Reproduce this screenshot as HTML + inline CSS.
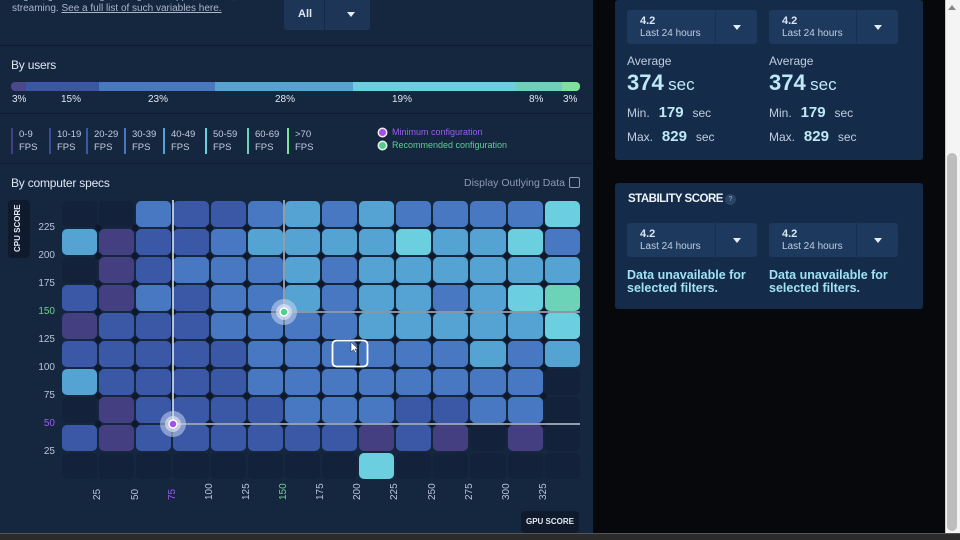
<!DOCTYPE html>
<html><head><meta charset="utf-8"><style>
*{margin:0;padding:0;box-sizing:border-box}
body{width:960px;height:540px;overflow:hidden;background:#07080b;font-family:"Liberation Sans",sans-serif;position:relative;color:#c9d3e3}
.a{position:absolute}
#left{left:0;top:0;width:593px;height:533px;background:#15263f}
.sep{position:absolute;left:0;width:593px;height:1px;background:#0f1c2f}
.h{font-size:12px;color:#dfe7f3;letter-spacing:-.2px}
.pct{font-size:10px;color:#dfe7f3;top:94px}
.lg{top:128px;font-size:9.5px;line-height:13px;color:#c3cde0;padding-left:6px;border-left:2px solid}
#grid{left:61px;top:200px;display:grid;grid-template-columns:repeat(14,37.14px);grid-template-rows:repeat(10,28px)}
#grid i{display:block;margin:1px;border-radius:5px}
.e{background:#14213a}.p{background:#443f80}.b{background:#3a58a6}.m{background:#4878c2}.l{background:#55a3d2}.c{background:#6bcfe0}.g{background:#6dd3b8}
.yl{font-size:10px;color:#b8c4d8;width:30px;text-align:right;left:25px}
.xl{font-size:10px;color:#b8c4d8;transform:rotate(-90deg);transform-origin:left top;top:500px}
.card{background:#142b4a;border-radius:3px}
.dd{height:34px;background:#1d3a5e;border-radius:3px}
.dd .t{position:absolute;left:13px;top:5px;font-size:11px;font-weight:bold;color:#dce6f3}
.dd .s{position:absolute;left:13px;top:18px;font-size:10px;color:#c0cde0}
.dd .ar{position:absolute;right:0;top:0;width:42px;height:34px;border-left:1px solid #163050}
.dd .ar:after{content:"";position:absolute;left:17px;top:15px;border:4px solid transparent;border-top:5px solid #e6edf6}
.lab{font-size:12px;color:#c0cde0}
.big{font-size:22px;font-weight:bold;color:#bfe9f7}
.num{font-size:15px;font-weight:bold;color:#bfe9f7}
.un{font-size:12.5px;font-weight:bold;color:#9fe2f5;line-height:13px}
</style></head><body>
<div id="left" class="a">
<div class="a" style="left:12px;top:-9px;font-size:10px;color:#aab6c9;line-height:12px">engine, game settings, background apps, network,<br>streaming. <u>See a full list of such variables here.</u></div>
<div class="a" style="left:284px;top:0;width:86px;height:30px;background:#1d3658;border-radius:0 0 3px 3px"><span class="a" style="left:14px;top:8px;font-size:11px;font-weight:bold;color:#dfe7f3">All</span><div class="a" style="left:40px;top:0;width:1px;height:30px;background:#15284a"></div><div class="a" style="left:63px;top:12px;border:4px solid transparent;border-top:5px solid #e6edf6"></div></div>
<div class="sep" style="top:45px"></div>
<div class="a h" style="left:11px;top:58px">By users</div>
<div class="a" style="left:11px;top:82px;width:569px;height:9px;border-radius:4px;overflow:hidden;display:flex">
<div style="width:15px;background:#4a478a"></div><div style="width:73px;background:#3a56a4"></div><div style="width:116px;background:#4878c2"></div><div style="width:138px;background:#55a3d2"></div><div style="width:163px;background:#6bcfe0"></div><div style="width:46px;background:#6dd0b8"></div><div style="width:18px;background:#7de39a"></div></div>
<div class="a pct" style="left:12px">3%</div><div class="a pct" style="left:61px">15%</div><div class="a pct" style="left:148px">23%</div><div class="a pct" style="left:275px">28%</div><div class="a pct" style="left:392px">19%</div><div class="a pct" style="left:529px">8%</div><div class="a pct" style="left:563px">3%</div>
<div class="sep" style="top:113px"></div>
<div class="a lg" style="left:11px;border-color:#443f80">0-9<br>FPS</div>
<div class="a lg" style="left:49px;border-color:#3d4a96">10-19<br>FPS</div>
<div class="a lg" style="left:86px;border-color:#3a58a6">20-29<br>FPS</div>
<div class="a lg" style="left:124px;border-color:#4878c2">30-39<br>FPS</div>
<div class="a lg" style="left:163px;border-color:#55a3d2">40-49<br>FPS</div>
<div class="a lg" style="left:205px;border-color:#6bcfe0">50-59<br>FPS</div>
<div class="a lg" style="left:247px;border-color:#6dd3b8">60-69<br>FPS</div>
<div class="a lg" style="left:287px;border-color:#7de39a">&gt;70<br>FPS</div>
<div class="a" style="left:379px;top:129px;width:7px;height:7px;border-radius:50%;background:#a34ff0;box-shadow:0 0 0 1.5px #eee"></div>
<div class="a" style="left:392px;top:127px;font-size:9px;color:#9a5cf0">Minimum configuration</div>
<div class="a" style="left:379px;top:142px;width:7px;height:7px;border-radius:50%;background:#4fd08a;box-shadow:0 0 0 1.5px #eee"></div>
<div class="a" style="left:392px;top:140px;font-size:9px;color:#5fcf94">Recommended configuration</div>
<div class="sep" style="top:163px"></div>
<div class="a h" style="left:11px;top:176px">By computer specs</div>
<div class="a" style="left:464px;top:177px;font-size:10.5px;color:#8e9bb0">Display Outlying Data</div>
<div class="a" style="left:569px;top:177px;width:11px;height:11px;border:1px solid #8e9bb0;border-radius:2px"></div>
<div class="a" style="left:8px;top:200px;width:22px;height:58px;background:#0f1b2c;border-radius:4px"><div class="a" style="left:5px;top:52px;transform:rotate(-90deg);transform-origin:left top;font-size:8px;font-weight:bold;color:#e3e9f2;white-space:nowrap">CPU SCORE</div></div>
<div id="grid" class="a">
<i class="e"></i><i class="e"></i><i class="m"></i><i class="b"></i><i class="b"></i><i class="m"></i><i class="l"></i><i class="m"></i><i class="l"></i><i class="m"></i><i class="m"></i><i class="m"></i><i class="m"></i><i class="c"></i>
<i class="l"></i><i class="p"></i><i class="b"></i><i class="b"></i><i class="m"></i><i class="l"></i><i class="l"></i><i class="l"></i><i class="l"></i><i class="c"></i><i class="l"></i><i class="l"></i><i class="c"></i><i class="m"></i>
<i class="e"></i><i class="p"></i><i class="b"></i><i class="m"></i><i class="m"></i><i class="m"></i><i class="l"></i><i class="m"></i><i class="l"></i><i class="l"></i><i class="l"></i><i class="l"></i><i class="l"></i><i class="l"></i>
<i class="b"></i><i class="p"></i><i class="m"></i><i class="b"></i><i class="m"></i><i class="m"></i><i class="l"></i><i class="m"></i><i class="l"></i><i class="l"></i><i class="m"></i><i class="l"></i><i class="c"></i><i class="g"></i>
<i class="p"></i><i class="b"></i><i class="b"></i><i class="b"></i><i class="m"></i><i class="m"></i><i class="m"></i><i class="m"></i><i class="l"></i><i class="l"></i><i class="l"></i><i class="l"></i><i class="l"></i><i class="c"></i>
<i class="b"></i><i class="b"></i><i class="b"></i><i class="b"></i><i class="b"></i><i class="m"></i><i class="m"></i><i class="m"></i><i class="m"></i><i class="m"></i><i class="m"></i><i class="l"></i><i class="m"></i><i class="l"></i>
<i class="l"></i><i class="b"></i><i class="b"></i><i class="b"></i><i class="b"></i><i class="m"></i><i class="m"></i><i class="m"></i><i class="m"></i><i class="m"></i><i class="m"></i><i class="m"></i><i class="m"></i><i class="e"></i>
<i class="e"></i><i class="p"></i><i class="b"></i><i class="b"></i><i class="b"></i><i class="b"></i><i class="m"></i><i class="m"></i><i class="m"></i><i class="b"></i><i class="b"></i><i class="m"></i><i class="m"></i><i class="e"></i>
<i class="b"></i><i class="p"></i><i class="b"></i><i class="b"></i><i class="b"></i><i class="b"></i><i class="b"></i><i class="b"></i><i class="p"></i><i class="b"></i><i class="p"></i><i class="e"></i><i class="p"></i><i class="e"></i>
<i class="e"></i><i class="e"></i><i class="e"></i><i class="e"></i><i class="e"></i><i class="e"></i><i class="e"></i><i class="e"></i><i class="c"></i><i class="e"></i><i class="e"></i><i class="e"></i><i class="e"></i><i class="e"></i>
</div>
<svg class="a" style="left:0;top:0" width="593" height="533">
<defs><pattern id="d" x="61" y="200" width="37.14" height="28" patternUnits="userSpaceOnUse"><circle cx="0" cy="0" r="3.6" fill="#0e1a2c"/><circle cx="37.14" cy="0" r="3.6" fill="#0e1a2c"/><circle cx="0" cy="28" r="3.6" fill="#0e1a2c"/><circle cx="37.14" cy="28" r="3.6" fill="#0e1a2c"/></pattern></defs>
<rect x="95" y="224" width="453" height="204" fill="url(#d)"/>
<line x1="173" y1="200" x2="173" y2="424" stroke="#e6edf6" stroke-width="1.5"/>
<line x1="173" y1="424" x2="580" y2="424" stroke="#e6edf6" stroke-width="1.5" opacity=".8"/>
<line x1="284" y1="200" x2="284" y2="312" stroke="#e6edf6" stroke-width="1.5" opacity=".8"/>
<line x1="284" y1="312" x2="580" y2="312" stroke="#e6edf6" stroke-width="1.5" opacity=".75"/>
<circle cx="173" cy="424" r="13" fill="#c9d6ee" opacity=".55"/><circle cx="173" cy="424" r="8" fill="#e6edf8" opacity=".6"/><circle cx="173" cy="424" r="4" fill="#a34ff0" stroke="#fff" stroke-width="1.5"/>
<circle cx="284" cy="312" r="13" fill="#c9d6ee" opacity=".55"/><circle cx="284" cy="312" r="8" fill="#e6edf8" opacity=".6"/><circle cx="284" cy="312" r="4" fill="#4fd08a" stroke="#fff" stroke-width="1.5"/>
<rect x="332.5" y="340.5" width="35" height="26" rx="4" fill="none" stroke="#fff" stroke-width="1.8"/>
<path d="M351 342 L351 352 L353.5 349.5 L355.5 353 L357 352.3 L355 349 L358 349 Z" fill="#fff" stroke="#222" stroke-width=".5"/>
</svg>
<div class="a yl" style="top:222px">225</div><div class="a yl" style="top:250px">200</div><div class="a yl" style="top:278px">175</div><div class="a yl" style="top:306px;color:#6fd38e">150</div><div class="a yl" style="top:334px">125</div><div class="a yl" style="top:362px">100</div><div class="a yl" style="top:390px">75</div><div class="a yl" style="top:418px;color:#a05cf0">50</div><div class="a yl" style="top:446px">25</div>
<div class="a xl" style="left:92px">25</div><div class="a xl" style="left:130px">50</div><div class="a xl" style="left:167px;color:#a05cf0">75</div><div class="a xl" style="left:204px">100</div><div class="a xl" style="left:241px">125</div><div class="a xl" style="left:278px;color:#6fd38e">150</div><div class="a xl" style="left:315px">175</div><div class="a xl" style="left:352px">200</div><div class="a xl" style="left:389px">225</div><div class="a xl" style="left:427px">250</div><div class="a xl" style="left:464px">275</div><div class="a xl" style="left:501px">300</div><div class="a xl" style="left:538px">325</div>
<div class="a" style="left:521px;top:511px;width:58px;height:22px;background:#0f1b2c;border-radius:4px;font-size:8px;font-weight:bold;color:#e3e9f2;text-align:center;line-height:22px">GPU SCORE</div>
</div>
<div class="a card" style="left:615px;top:0;width:308px;height:160px">
<div class="a dd" style="left:12px;top:10px;width:130px"><span class="t">4.2</span><span class="s">Last 24 hours</span><div class="ar"></div></div>
<div class="a dd" style="left:154px;top:10px;width:129px"><span class="t">4.2</span><span class="s">Last 24 hours</span><div class="ar"></div></div>
<div class="a lab" style="left:12px;top:54px">Average</div><div class="a lab" style="left:154px;top:54px">Average</div>
<div class="a" style="left:12px;top:70px"><span class="big">374</span> <span style="font-size:17px;color:#bfe9f7">sec</span></div>
<div class="a" style="left:154px;top:70px"><span class="big">374</span> <span style="font-size:17px;color:#bfe9f7">sec</span></div>
<div class="a" style="left:12px;top:104px"><span class="lab">Min.</span>&nbsp; <span class="num">179</span>&nbsp; <span class="lab">sec</span></div>
<div class="a" style="left:154px;top:104px"><span class="lab">Min.</span>&nbsp; <span class="num">179</span>&nbsp; <span class="lab">sec</span></div>
<div class="a" style="left:12px;top:128px"><span class="lab">Max.</span>&nbsp; <span class="num">829</span>&nbsp; <span class="lab">sec</span></div>
<div class="a" style="left:154px;top:128px"><span class="lab">Max.</span>&nbsp; <span class="num">829</span>&nbsp; <span class="lab">sec</span></div>
</div>
<div class="a card" style="left:615px;top:183px;width:308px;height:126px">
<div class="a" style="left:13px;top:10px;font-size:11.5px;font-weight:bold;color:#eef3f9;letter-spacing:-.5px">STABILITY SCORE</div>
<div class="a" style="left:110px;top:11px;width:11px;height:11px;border-radius:50%;background:#2a4366;font-size:7px;text-align:center;line-height:11px;color:#aab">?</div>
<div class="a dd" style="left:12px;top:40px;width:130px"><span class="t">4.2</span><span class="s">Last 24 hours</span><div class="ar"></div></div>
<div class="a dd" style="left:154px;top:40px;width:129px"><span class="t">4.2</span><span class="s">Last 24 hours</span><div class="ar"></div></div>
<div class="a un" style="left:12px;top:86px">Data unavailable for<br>selected filters.</div>
<div class="a un" style="left:154px;top:86px">Data unavailable for<br>selected filters.</div>
</div>
<div class="a" style="left:945px;top:0;width:15px;height:535px;background:#f4f4f4;border-left:1px solid #ccc"></div>
<div class="a" style="left:947px;top:153px;width:10px;height:378px;background:#bdbdbd;border-radius:5px"></div>
<div class="a" style="left:948px;top:5px;border:4px solid transparent;border-bottom:5px solid #888;border-top:0"></div>
<div class="a" style="left:0;top:533px;width:960px;height:7px;background:#2b2b2b;border-top:1px solid #555"></div>
</body></html>
